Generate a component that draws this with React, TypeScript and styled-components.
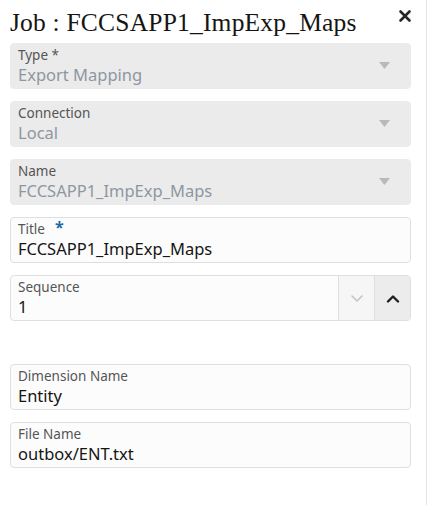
import React from "react";
import styled, { createGlobalStyle } from "styled-components";

const Global = createGlobalStyle`
  html, body { margin: 0; padding: 0; background: #fff; }
  body { font-family: "Noto Sans", "Open Sans", sans-serif; }
`;

const Panel = styled.div`
  width: 427px;
  height: 505px;
  box-sizing: border-box;
  border-right: 1px solid #e4e4e4;
  background: #fff;
`;

const Header = styled.div`
  height: 43px;
  display: flex;
  align-items: flex-start;
  justify-content: space-between;
  padding: 0 15px 0 10px;
  box-sizing: border-box;
`;

const Heading = styled.h1`
  margin: 0;
  padding-top: 8px;
  font-family: "Liberation Serif", "DejaVu Serif", serif;
  font-weight: normal;
  font-size: 25.5px;
  line-height: 30px;
  color: #161513;
  letter-spacing: 0.2px;
`;

const CloseButton = styled.button`
  border: 0;
  background: none;
  padding: 0;
  margin-top: 9px;
  margin-right: -1px;
  width: 14px;
  height: 14px;
  display: flex;
  cursor: pointer;
`;

const Form = styled.div`
  display: flex;
  flex-direction: column;
  gap: 12px;
  padding: 0 15px 0 10px;
`;

const Field = styled.div<{ $disabled?: boolean }>`
  height: 46px;
  box-sizing: border-box;
  border-radius: 4px;
  display: flex;
  align-items: stretch;
  background: ${(p) => (p.$disabled ? "#ebebeb" : "#fcfcfc")};
  border: 1px solid ${(p) => (p.$disabled ? "#ebebeb" : "#dfdfdf")};
  overflow: hidden;
`;

const FieldBody = styled.div`
  flex: 1;
  display: flex;
  flex-direction: column;
  padding: 2px 0 0 7px;
  min-width: 0;
`;

const Label = styled.div`
  font-size: 13.5px;
  line-height: 18px;
  height: 18px;
  color: #555;
  display: flex;
  align-items: flex-start;
`;

const Required = styled.span`
  color: #1d6aa8;
  font-size: 16px;
  line-height: 12px;
  height: 12px;
  font-weight: bold;
  margin-left: 10px;
  margin-top: 1px;
`;

const Value = styled.div<{ $disabled?: boolean }>`
  font-size: 16.5px;
  line-height: 21px;
  color: ${(p) => (p.$disabled ? "#8e97a1" : "#161513")};
  white-space: nowrap;
`;

const Caret = styled.div`
  width: 52px;
  display: flex;
  align-items: center;
  justify-content: center;
  padding-bottom: 2px;
`;

const StepButton = styled.div<{ $active?: boolean }>`
  width: 35px;
  display: flex;
  align-items: center;
  justify-content: center;
  border-left: 1px solid #dfdfdf;
  background: ${(p) => (p.$active ? "#ececec" : "#f6f6f6")};
`;

const Spacer = styled.div`
  height: 19px;
`;

const Triangle = () => (
  <svg width="11" height="7" viewBox="0 0 11 7">
    <path d="M0 0 H11 L5.5 7 Z" fill="#b9b9b9" />
  </svg>
);

const Chevron = ({ up, color, w }: { up?: boolean; color: string; w: number }) => (
  <svg width="14" height="9" viewBox="0 0 14 9">
    <path
      d={up ? "M2 7.5 L7 2.5 L12 7.5" : "M2 2 L7 7 L12 2"}
      fill="none"
      stroke={color}
      strokeWidth={w}
      strokeLinecap="round"
      strokeLinejoin="round"
    />
  </svg>
);

type SelectProps = { label: string; value: string };
const DisabledSelect = ({ label, value }: SelectProps) => (
  <Field $disabled>
    <FieldBody>
      <Label>{label}</Label>
      <Value $disabled>{value}</Value>
    </FieldBody>
    <Caret>
      <Triangle />
    </Caret>
  </Field>
);

const TextField = ({ label, value, required }: SelectProps & { required?: boolean }) => (
  <Field>
    <FieldBody>
      <Label>
        {label}
        {required && <Required>*</Required>}
      </Label>
      <Value>{value}</Value>
    </FieldBody>
  </Field>
);

export default function App() {
  return (
    <>
      <Global />
      <Panel>
        <Header>
          <Heading>Job : FCCSAPP1_ImpExp_Maps</Heading>
          <CloseButton aria-label="Close">
            <svg width="14" height="14" viewBox="0 0 14 14">
              <path d="M2.5 2.5 L11.5 11.5 M11.5 2.5 L2.5 11.5" stroke="#262626" strokeWidth="2.6" strokeLinecap="round" />
            </svg>
          </CloseButton>
        </Header>
        <Form>
          <DisabledSelect label="Type *" value="Export Mapping" />
          <DisabledSelect label="Connection" value="Local" />
          <DisabledSelect label="Name" value="FCCSAPP1_ImpExp_Maps" />
          <TextField label="Title" value="FCCSAPP1_ImpExp_Maps" required />
          <Field>
            <FieldBody>
              <Label>Sequence</Label>
              <Value>1</Value>
            </FieldBody>
            <StepButton>
              <Chevron color="#c4c4c4" w={1.6} />
            </StepButton>
            <StepButton $active>
              <Chevron up color="#1f1f1f" w={2.4} />
            </StepButton>
          </Field>
          <Spacer />
          <TextField label="Dimension Name" value="Entity" />
          <TextField label="File Name" value="outbox/ENT.txt" />
        </Form>
      </Panel>
    </>
  );
}
